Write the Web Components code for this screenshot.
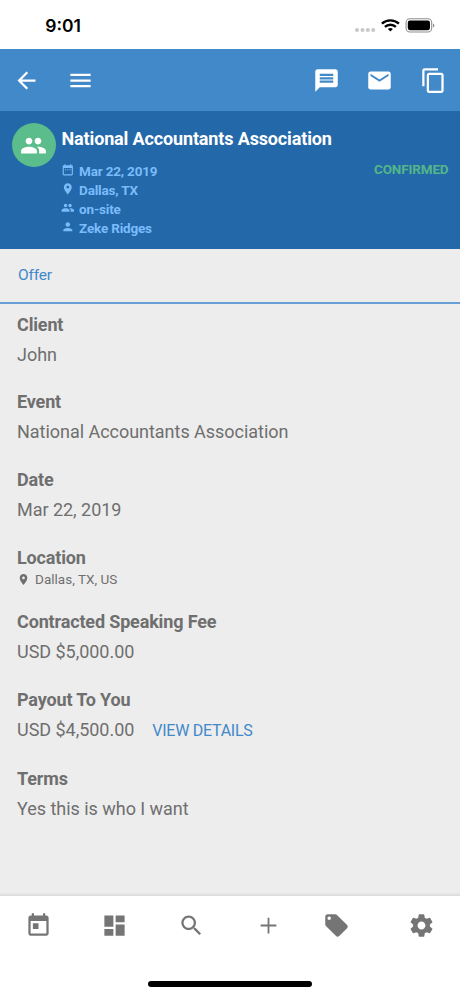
<!DOCTYPE html>
<html lang="en">
<head>
<meta charset="utf-8">
<title>Offer</title>
<style>
html,body{margin:0;height:100%;background:#fff}
body{font-family:Roboto,sans-serif;overflow:hidden}
</style>
</head>
<body>
<app-screen></app-screen>
<script>
const define = (name, html) => customElements.define(name, class extends HTMLElement {
  constructor() {
    super();
    this.attachShadow({mode: 'open'}).innerHTML = html;
  }
});

const ICONS = {
  back: 'M20 11H7.83l5.59-5.59L12 4l-8 8 8 8 1.41-1.41L7.83 13H20v-2z',
  menu: 'M3 18h18v-2H3v2zm0-5h18v-2H3v2zm0-7v2h18V6H3z',
  message: 'M20 2H4c-1.1 0-1.99.9-1.99 2L2 22l4-4h14c1.1 0 2-.9 2-2V4c0-1.1-.9-2-2-2zm-2 12H6v-2h12v2zm0-3H6V9h12v2zm0-3H6V6h12v2z',
  mail: 'M20 4H4c-1.1 0-1.99.9-1.99 2L2 18c0 1.1.9 2 2 2h16c1.1 0 2-.9 2-2V6c0-1.1-.9-2-2-2zm0 4l-8 5-8-5V6l8 5 8-5v2z',
  copy: 'M16 1H4c-1.1 0-2 .9-2 2v14h2V3h12V1zm3 4H8c-1.1 0-2 .9-2 2v14c0 1.1.9 2 2 2h11c1.1 0 2-.9 2-2V7c0-1.1-.9-2-2-2zm0 16H8V7h11v14z',
  people: 'M16 11c1.66 0 2.99-1.34 2.99-3S17.66 5 16 5c-1.66 0-3 1.34-3 3s1.34 3 3 3zm-8 0c1.66 0 2.99-1.34 2.99-3S9.66 5 8 5C6.34 5 5 6.34 5 8s1.34 3 3 3zm0 2c-2.33 0-7 1.17-7 3.5V19h14v-2.5c0-2.33-4.67-3.5-7-3.5zm8 0c-.29 0-.62.02-.97.05 1.16.84 1.97 1.97 1.97 3.45V19h6v-2.5c0-2.33-4.67-3.5-7-3.5z',
  dates: 'M9 11H7v2h2v-2zm4 0h-2v2h2v-2zm4 0h-2v2h2v-2zm2-7h-1V2h-2v2H8V2H6v2H5c-1.11 0-1.99.9-1.99 2L3 20c0 1.1.89 2 2 2h14c1.1 0 2-.9 2-2V6c0-1.1-.9-2-2-2zm0 16H5V9h14v11z',
  place: 'M12 2C8.13 2 5 5.13 5 9c0 5.25 7 13 7 13s7-7.75 7-13c0-3.87-3.13-7-7-7zm0 9.5c-1.38 0-2.5-1.12-2.5-2.5s1.12-2.5 2.5-2.5 2.5 1.12 2.5 2.5-1.12 2.5-2.5 2.5z',
  person: 'M12 12c2.21 0 4-1.79 4-4s-1.79-4-4-4-4 1.79-4 4 1.79 4 4 4zm0 2c-2.67 0-8 1.34-8 4v2h16v-2c0-2.66-5.33-4-8-4z',
  today: 'M19 3h-1V1h-2v2H8V1H6v2H5c-1.11 0-1.99.9-1.99 2L3 19c0 1.1.89 2 2 2h14c1.1 0 2-.9 2-2V5c0-1.1-.9-2-2-2zm0 16H5V8h14v11zM7 10h5v5H7z',
  dashboard: 'M3 13h8V3H3v10zm0 8h8v-6H3v6zm10 0h8V11h-8v10zm0-18v6h8V3h-8z',
  search: 'M15.5 14h-.79l-.28-.27C15.41 12.59 16 11.11 16 9.5 16 5.91 13.09 3 9.5 3S3 5.91 3 9.5 5.91 16 9.5 16c1.61 0 3.09-.59 4.23-1.57l.27.28v.79l5 4.99L20.49 19l-4.99-5zm-6 0C7.01 14 5 11.99 5 9.5S7.01 5 9.5 5 14 7.01 14 9.5 11.99 14 9.5 14z',
  add: 'M19 12.8h-6.2V19h-1.6v-6.2H5v-1.6h6.2V5h1.6v6.2H19v1.6z',
  tag: 'M21.41 11.58l-9-9C12.05 2.22 11.55 2 11 2H4c-1.1 0-2 .9-2 2v7c0 .55.22 1.05.59 1.42l9 9c.36.36.86.58 1.41.58.55 0 1.05-.22 1.41-.59l7-7c.37-.36.59-.86.59-1.41 0-.55-.23-1.06-.59-1.42zM5.5 7C4.67 7 4 6.33 4 5.5S4.67 4 5.5 4 7 4.67 7 5.5 6.33 7 5.5 7z',
  settings: 'M19.43 12.98c.04-.32.07-.64.07-.98s-.03-.66-.07-.98l2.11-1.65c.19-.15.24-.42.12-.64l-2-3.46c-.12-.22-.39-.3-.61-.22l-2.49 1c-.52-.4-1.08-.73-1.69-.98l-.38-2.65C14.46 2.18 14.25 2 14 2h-4c-.25 0-.46.18-.49.42l-.38 2.65c-.61.25-1.17.59-1.69.98l-2.49-1c-.23-.09-.49 0-.61.22l-2 3.46c-.13.22-.07.49.12.64l2.11 1.65c-.04.32-.07.65-.07.98s.03.66.07.98l-2.11 1.65c-.19.15-.24.42-.12.64l2 3.46c.12.22.39.3.61.22l2.49-1c.52.4 1.08.73 1.69.98l.38 2.65c.03.24.24.42.49.42h4c.25 0 .46-.18.49-.42l.38-2.65c.61-.25 1.17-.59 1.69-.98l2.49 1c.23.09.49 0 .61-.22l2-3.46c.12-.22.07-.49-.12-.64l-2.11-1.65zM12 15.5c-1.93 0-3.5-1.57-3.5-3.5s1.57-3.5 3.5-3.5 3.5 1.57 3.5 3.5-1.57 3.5-3.5 3.5z'
};

customElements.define('md-icon', class extends HTMLElement {
  constructor() {
    super();
    this.attachShadow({mode: 'open'});
  }
  connectedCallback() {
    this.shadowRoot.innerHTML = `<style>
      :host{display:block;flex:none;width:var(--size,27px);height:var(--size,27px)}
      svg{display:block;width:100%;height:100%;fill:currentColor}
    </style><svg viewBox="0 0 24 24"><path d="${ICONS[this.getAttribute('name')]}"/></svg>`;
  }
});

define('status-bar', `<style>
  :host{display:flex;box-sizing:border-box;height:49px;padding:0 25px 0 45.3px;align-items:center;background:#fff;color:#000;
    font:600 17.5px/20px Inter,sans-serif}
  time{flex:1;padding-top:3px;letter-spacing:0}
  svg{display:block;margin-top:3px}
  </style>
  <time>9:01</time>
  <svg width="81" height="16" viewBox="0 0 81 16">
    <g fill="#c8c8c8"><circle cx="3" cy="12" r="2"/><circle cx="8.5" cy="12" r="2"/><circle cx="13.8" cy="12" r="2"/><circle cx="19.2" cy="12" r="2"/></g>
    <g fill="none" stroke="#000" stroke-width="2.4"><path d="M27.9 5.7a12.4 12.4 0 0 1 17 0"/><path d="M30.9 8.9a8 8 0 0 1 11 0"/></g>
    <path d="M36.4 13.6l-2.5-2.5a3.7 3.7 0 0 1 5 0z"/>
    <rect x="52.1" y=".8" width="25.6" height="13.2" rx="3.8" fill="none" stroke="#8f8f8f" stroke-width="1.1"/>
    <rect x="53.8" y="2.6" width="22.2" height="9.6" rx="2.1"/>
    <path d="M79 5.4c1.9.8 1.9 3.2 0 4z" fill="#8f8f8f"/>
  </svg>`);

define('tool-bar', `<style>
  :host{display:flex;box-sizing:border-box;height:62px;padding:0 13.5px 0 13px;align-items:center;gap:26.2px;background:#4189c9;color:#fff}
  span{flex:1}
  .menu{margin-left:.8px}
  </style>
  <md-icon name="back"></md-icon><md-icon class="menu" name="menu"></md-icon><span></span>
  <md-icon name="message"></md-icon><md-icon name="mail"></md-icon><md-icon name="copy"></md-icon>`);

define('meta-row', `<style>
  :host{display:grid;grid-template-columns:13px 1fr;column-gap:4.6px;height:19px;line-height:19px;align-items:start;white-space:nowrap}
  ::slotted(md-icon){--size:13.6px;margin:.5px 0 0 -.5px}
  </style><slot name="icon"></slot><span><slot></slot></span>`);

define('event-hero', `<style>
  :host{display:grid;grid-template-columns:44px 1fr auto;box-sizing:border-box;height:138px;padding:12px 11.5px 0 11.5px;background:#2368a9;color:#fff}
  .avatar{width:44px;height:44px;border-radius:50%;background:#5abd8b;display:grid;place-items:center}
  .info{padding:5px 0 0 6px}
  h1{margin:0;font-size:18px;line-height:22px;font-weight:700;white-space:nowrap;letter-spacing:-.14px}
  .meta{padding-top:12px;color:#7abcfb;font-size:13.5px;font-weight:700;letter-spacing:-.19px}
  .status{padding-top:38px;font-size:13.5px;line-height:16px;font-weight:700;color:#53b68a;letter-spacing:-.15px}
  </style>
  <div class="avatar"><md-icon name="people"></md-icon></div>
  <div class="info"><h1>National Accountants Association</h1>
    <div class="meta">
      <meta-row><md-icon slot="icon" name="dates"></md-icon>Mar 22, 2019</meta-row>
      <meta-row><md-icon slot="icon" name="place"></md-icon>Dallas, TX</meta-row>
      <meta-row><md-icon slot="icon" name="people"></md-icon>on-site</meta-row>
      <meta-row><md-icon slot="icon" name="person"></md-icon>Zeke Ridges</meta-row>
    </div></div>
  <div class="status">CONFIRMED</div>`);

define('tab-strip', `<style>
  :host{display:block;box-sizing:border-box;height:55px;padding:16px 18px 0;border-bottom:2px solid #68a0d6;background:#ededed;
    color:#4189c9;font-size:15.5px;line-height:20px;letter-spacing:-.2px}
  </style><slot></slot>`);

define('detail-field', `<style>
  :host{display:block;height:var(--h,78px);font-size:18px;white-space:nowrap;color:#6f6f6f}
  .label{font-weight:700;line-height:22px;height:30px;letter-spacing:-.15px}
  .value{line-height:22px;display:flex;letter-spacing:-.03px}
  :host([compact]) .label{height:21px}
  :host([compact]) .value{font-size:13.5px;line-height:22px;gap:5px;align-items:center;letter-spacing:.02px}
  </style><div class="label"><slot name="label"></slot></div><div class="value"><slot></slot></div>`);

define('offer-details', `<style>
  :host{display:block;flex:1;padding:10px 17px 0;background:#ededed;box-shadow:inset 0 -3px 2px -1px #dedede}
  a{font-size:16px;color:#4189c9;margin-left:18px;letter-spacing:-.27px;line-height:23px}
  md-icon{--size:13px}
  </style>
  <detail-field style="--h:77px"><span slot="label">Client</span>John</detail-field>
  <detail-field><span slot="label">Event</span>National Accountants Association</detail-field>
  <detail-field><span slot="label">Date</span>Mar 22, 2019</detail-field>
  <detail-field compact style="--h:64px"><span slot="label">Location</span><md-icon name="place"></md-icon><span>Dallas, TX, US</span></detail-field>
  <detail-field><span slot="label">Contracted Speaking Fee</span>USD $5,000.00</detail-field>
  <detail-field style="--h:79px"><span slot="label">Payout To You</span><span>USD $4,500.00</span><a>VIEW DETAILS</a></detail-field>
  <detail-field><span slot="label">Terms</span>Yes this is who I want</detail-field>`);

define('bottom-nav', `<style>
  :host{display:flex;flex-direction:column;align-items:center;box-sizing:border-box;height:100px;padding:16px 0 9.3px;background:#fff;color:#757575}
  nav{display:grid;grid-template-columns:repeat(6,1fr);justify-items:center;width:100%;flex:1}
  .tag{margin-right:17px}
  .home{width:164px;height:5.7px;border-radius:3px;background:#000}
  </style>
  <nav><md-icon name="today"></md-icon><md-icon name="dashboard"></md-icon><md-icon name="search"></md-icon>
  <md-icon name="add"></md-icon><md-icon class="tag" name="tag"></md-icon><md-icon name="settings"></md-icon></nav>
  <div class="home"></div>`);

define('app-screen', `<style>
  :host{display:flex;flex-direction:column;width:460px;height:996px}
  </style>
  <status-bar></status-bar><tool-bar></tool-bar><event-hero></event-hero>
  <tab-strip>Offer</tab-strip><offer-details></offer-details><bottom-nav></bottom-nav>`);
</script>
</body>
</html>
